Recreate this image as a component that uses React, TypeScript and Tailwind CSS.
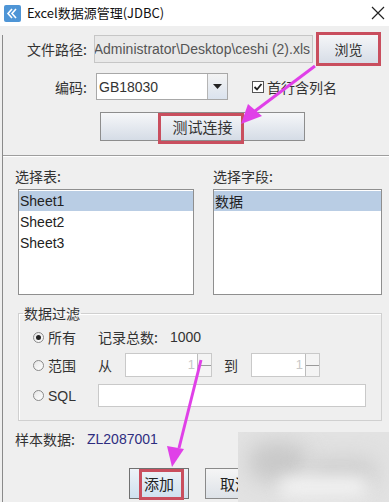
import React from "react";

const font = { fontFamily: '"Noto Sans CJK SC", "Liberation Sans", sans-serif' };

function Radio({ checked }: { checked?: boolean }) {
  return (
    <span className="w-[11px] h-[11px] rounded-full border border-[#8a8a8a] bg-gradient-to-br from-[#e6e6e6] to-white flex items-center justify-center shrink-0">
      {checked && <span className="w-[5px] h-[5px] rounded-full bg-[#222]" />}
    </span>
  );
}

function Spinner({ w }: { w: string }) {
  return (
    <div className={`${w} h-[24px] flex border border-[#c9c9c9] bg-white`}>
      <div className="flex-1 flex items-center justify-end pr-[2px] text-[13px] text-[#c8c8c8]" style={{ fontFamily: '"Liberation Sans", sans-serif' }}>1</div>
      <div className="w-[14px] flex flex-col border-l border-[#bdbdbd] bg-[#f4f4f4]">
        <div className="flex-1 border-b border-[#9a9a9a]" />
        <div className="flex-1" />
      </div>
    </div>
  );
}

export default function App() {
  return (
    <div className="w-[389px] h-[502px] relative overflow-hidden bg-[#efefef] text-[14px] leading-[18px] text-[#333]" style={font}>
      {/* Title bar */}
      <div className="h-[26px] bg-white flex items-center">
        <svg width="17" height="17" viewBox="0 0 17 17" className="ml-[4px]">
          <rect x="0" y="0" width="17" height="17" rx="2" fill="#4e95d6" />
          <path d="M8 4 L4 8.5 L8 13" stroke="#fff" strokeWidth="1.6" fill="none" />
          <path d="M12 4 L8 8.5 L12 13" stroke="#fff" strokeWidth="1.6" fill="none" />
        </svg>
        <span className="ml-[6px] text-[13px] text-[#111]">Excel数据源管理(JDBC)</span>
        <svg width="14" height="14" viewBox="0 0 14 14" className="ml-auto mr-[4px]">
          <path d="M1 1 L13 13 M13 1 L1 13" stroke="#222" strokeWidth="1.2" />
        </svg>
      </div>

      <div className="border-l-[1px] border-[#8a8a8a] ml-[2px] h-[476px]">
        {/* Row 1 */}
        <div className="mt-[9px] h-[28px] flex items-center">
          <div className="w-[84px] text-right">文件路径:</div>
          <div className="ml-[7px] w-[219px] h-[28px] border border-[#c6c6c6] bg-[#e9e9e9] flex justify-end items-center overflow-hidden whitespace-nowrap pr-[2px]" style={{ fontFamily: '"Liberation Sans", sans-serif' }}>
            <span className="text-[14px] text-[#555]">Administrator\Desktop\ceshi (2).xls</span>
          </div>
          <div className="ml-[3px] -my-[3px] w-[65px] h-[34px] border-[3px] border-[#c94e5e] flex">
            <div className="flex-1 bg-gradient-to-b from-[#f5f6f8] to-[#d7dde7] flex items-center justify-center text-[#333]">浏览</div>
          </div>
        </div>

        {/* Row 2 */}
        <div className="mt-[10px] h-[27px] flex items-center">
          <div className="w-[84px] text-right">编码:</div>
          <div className="ml-[9px] w-[132px] h-[27px] border border-[#a8a8a8] bg-white flex">
            <div className="flex-1 flex items-center pl-[2px] text-[#333]" style={{ fontFamily: '"Liberation Sans", sans-serif' }}>GB18030</div>
            <div className="w-[20px] border-l border-[#b5b5b5] bg-gradient-to-b from-[#f3f3f3] to-[#dbe3ee] flex items-center justify-center">
              <svg width="9" height="5" viewBox="0 0 9 5"><path d="M0 0 H9 L4.5 5 Z" fill="#222" /></svg>
            </div>
          </div>
          <div className="ml-[24px] w-[12px] h-[12px] border border-[#555] bg-white flex items-center justify-center">
            <svg width="10" height="10" viewBox="0 0 10 10"><path d="M1.5 5 L4 7.5 L8.5 2" stroke="#222" strokeWidth="1.8" fill="none" /></svg>
          </div>
          <span className="ml-[3px]">首行含列名</span>
        </div>

        {/* Row 3 */}
        <div className="mt-[12px] ml-[97px] w-[205px] h-[29px] relative border border-[#8d8d8d] bg-gradient-to-b from-[#f6f7f9] to-[#d5dce6] flex items-center justify-center">
          <span className="text-[#333] text-[15px]">测试连接</span>
          <span className="absolute left-[57px] top-[0px] w-[86px] h-[31px] border-[3px] border-[#c94e5e]" />
        </div>

        {/* Separator */}
        <div className="mt-[14px] h-px bg-[#9e9e9e]" />
        <div className="h-px bg-white" />

        {/* List labels */}
        <div className="mt-[10px] h-[18px] flex">
          <span className="ml-[12px] w-[198px]">选择表:</span>
          <span>选择字段:</span>
        </div>

        {/* Lists */}
        <div className="mt-[4px] h-[106px] flex">
          <div className="ml-[15px] w-[176px] border border-[#8f8f8f] bg-white pt-px" style={{ fontFamily: '"Liberation Sans", "Noto Sans CJK SC", sans-serif' }}>
            <div className="h-[20px] bg-[#b9cde4] flex items-center pl-px text-[#222]">Sheet1</div>
            <div className="h-[21px] flex items-center pl-px text-[#222]">Sheet2</div>
            <div className="h-[21px] flex items-center pl-px text-[#222]">Sheet3</div>
          </div>
          <div className="ml-[19px] w-[169px] border border-[#8f8f8f] bg-white pt-px">
            <div className="h-[20px] bg-[#b9cde4] flex items-center pl-px text-[#222]">数据</div>
          </div>
        </div>

        {/* Filter group */}
        <fieldset className="mt-[9px] ml-[15px] w-[364px] border border-[#d0d0d0] pl-[14px] pb-[13px] shadow-[inset_1px_1px_0_#fff]">
          <legend className="-ml-[10px] px-[1px] text-[#333]">数据过滤</legend>
          <div className="mt-[3px] h-[24px] flex items-center">
            <Radio checked />
            <span className="ml-[4px] w-[50px]">所有</span>
            <span>记录总数:</span>
            <span className="ml-[12px]" style={{ fontFamily: '"Liberation Sans", sans-serif' }}>1000</span>
          </div>
          <div className="mt-[4px] h-[24px] flex items-center">
            <Radio />
            <span className="ml-[4px] w-[50px]">范围</span>
            <span className="w-[27px]">从</span>
            <Spinner w="w-[87px]" />
            <span className="ml-[12px] w-[27px]">到</span>
            <Spinner w="w-[69px]" />
          </div>
          <div className="mt-[7px] h-[23px] flex items-center">
            <Radio />
            <span className="ml-[4px] w-[50px]" style={{ fontFamily: '"Liberation Sans", sans-serif' }}>SQL</span>
            <div className="w-[268px] h-[23px] border border-[#c9c9c9] bg-white" />
          </div>
        </fieldset>

        {/* Sample data */}
        <div className="mt-[9px] h-[18px] flex">
          <span className="ml-[12px] w-[72px]">样本数据:</span>
          <span className="text-[#2e2d7f]" style={{ fontFamily: '"Liberation Sans", sans-serif' }}>ZL2087001</span>
        </div>

        {/* Buttons */}
        <div className="mt-[20px] flex">
          <div className="ml-[126px] w-[60px] h-[31px] relative border border-[#707070] bg-gradient-to-b from-[#eef3f8] to-[#cfe0ef] flex items-center justify-center">
            <span className="text-[15px] text-[#222]">添加</span>
            <span className="absolute left-[9px] top-[0px] w-[45px] h-[31px] border-[3px] border-[#c94e5e]" />
          </div>
          <div className="ml-[16px] w-[60px] h-[31px] border border-[#8a8a8a] bg-gradient-to-b from-[#f5f5f5] to-[#dde2e8] flex items-center justify-center">
            <span className="text-[15px] text-[#222]">取消</span>
          </div>
        </div>
      </div>

      {/* Watermark blur overlay */}
      <div className="absolute left-[238px] top-[432px] w-[151px] h-[70px] bg-[#e2e2e2] overflow-hidden">
        <div className="absolute left-[10px] top-[10px] w-[60px] h-[40px] rounded-full bg-[#c9c9c9] blur-[10px]" />
        <div className="absolute left-[70px] top-[25px] w-[70px] h-[30px] rounded-full bg-[#d0d0d0] blur-[10px]" />
        <div className="absolute left-[40px] top-[45px] w-[90px] h-[20px] rounded-full bg-[#f2f2f2] blur-[8px]" />
      </div>

      {/* Magenta arrows */}
      <svg className="absolute left-0 top-0 pointer-events-none" width="389" height="502" viewBox="0 0 389 502">
        <line x1="315" y1="66" x2="255" y2="111" stroke="#e040e8" strokeWidth="3" />
        <path d="M241 124 L248 104 L262 116 Z" fill="#e040e8" />
        <line x1="201" y1="360" x2="179" y2="448" stroke="#e040e8" strokeWidth="3" />
        <path d="M172 467 L167 446 L184 449 Z" fill="#e040e8" />
      </svg>
    </div>
  );
}
